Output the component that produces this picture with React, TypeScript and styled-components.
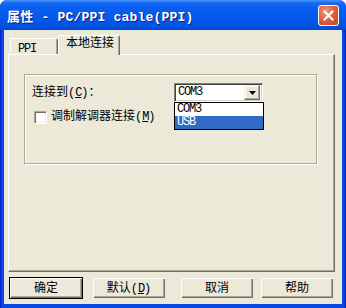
import React from 'react';
import styled, { createGlobalStyle } from 'styled-components';

const GlobalStyle = createGlobalStyle`
  html, body {
    margin: 0;
    padding: 0;
    background: #ffffff;
  }
  body {
    font-family: "Liberation Mono", "Noto Sans CJK SC", monospace;
  }
`;

const Window = styled.div`
  width: 346px;
  height: 308px;
  display: flex;
  flex-direction: column;
  background: linear-gradient(90deg, #0019CF 0, #0848E0 2px, #0848E0 calc(100% - 2px), #001DA8 100%);
  border-radius: 7px 7px 0 0;
  overflow: hidden;
`;

const TitleBar = styled.div`
  height: 30px;
  flex: none;
  display: flex;
  align-items: center;
  justify-content: space-between;
  padding: 0 7px 0 7px;
  background: linear-gradient(180deg, #4A96FF 0, #1468F4 3px, #0A5FF0 8px, #0558EA 18px, #0054E3 26px, #0048D0 30px);
  box-sizing: border-box;
`;

const Title = styled.div`
  color: #ffffff;
  font-size: 13px;
  font-weight: bold;
  letter-spacing: 0.2px;
  text-shadow: 1px 1px 0 #0A1E8A;
  white-space: pre;
  margin-top: 1px;
`;

const CloseButton = styled.div`
  width: 21px;
  height: 21px;
  box-sizing: border-box;
  border: 1px solid #ffffff;
  border-radius: 3px;
  background: radial-gradient(circle at 35% 30%, #F29A7C 0, #E2613A 45%, #C8421A 100%);
  display: flex;
  align-items: center;
  justify-content: center;
`;

const Body = styled.div`
  flex: 1;
  margin: 0 4px 4px;
  background: #ECE9D8;
  display: flex;
  flex-direction: column;
`;

const TabStrip = styled.div`
  display: flex;
  align-items: flex-end;
  padding: 5px 0 0 6px;
  height: 19px;
  position: relative;
  z-index: 1;
`;

const Tab = styled.div<{ $active?: boolean }>`
  box-sizing: border-box;
  height: ${({ $active }) => ($active ? '20px' : '16px')};
  width: ${({ $active }) => ($active ? '62px' : '48px')};
  margin-bottom: ${({ $active }) => ($active ? '-1px' : '0')};
  padding: ${({ $active }) => ($active ? '1px 0 0 7px' : '3px 0 0 7px')};
  background: #ECE9D8;
  border-top: 1px solid #ffffff;
  border-left: 1px solid #ffffff;
  border-right: 1px solid #716F64;
  box-shadow: inset -1px 0 0 #ACA899;
  border-radius: 2px 2px 0 0;
  font-size: 12px;
  letter-spacing: ${({ $active }) => ($active ? '0' : '-1.2px')};
  line-height: 14px;
  color: #000;
`;

const Panel = styled.div`
  box-sizing: border-box;
  margin: 0 7px 0 4px;
  height: 218px;
  border-top: 1px solid #ffffff;
  border-left: 1px solid #ffffff;
  border-right: 1px solid #716F64;
  border-bottom: 1px solid #716F64;
  box-shadow: inset -1px -1px 0 #ACA899;
  padding: 19px 0 0 15px;
`;

const GroupBox = styled.div`
  box-sizing: border-box;
  width: 293px;
  height: 90px;
  border: 1px solid #ACA899;
  box-shadow: 1px 1px 0 #ffffff, inset 1px 1px 0 #ffffff;
  padding: 8px 0 0 7px;
`;

const Row = styled.div<{ $top?: number }>`
  display: flex;
  align-items: center;
  margin-top: ${({ $top }) => $top ?? 0}px;
`;

const Label = styled.div<{ $width?: number }>`
  width: ${({ $width }) => ($width ? `${$width}px` : 'auto')};
  font-size: 12px;
  line-height: 14px;
  color: #000;
  white-space: pre;
`;

const Key = styled.span`
  text-decoration: underline;
  letter-spacing: -1.2px;
`;

const Combo = styled.div`
  position: relative;
  box-sizing: border-box;
  width: 89px;
  height: 19px;
  background: #ffffff;
  border-top: 1px solid #808080;
  border-left: 1px solid #808080;
  border-right: 1px solid #ffffff;
  border-bottom: 1px solid #ffffff;
  box-shadow: inset 1px 1px 0 #404040, inset -1px -1px 0 #D4D0C8;
  display: flex;
  align-items: center;
  padding-left: 3px;
`;

const ComboText = styled.span`
  flex: 1;
  font-size: 12px;
  letter-spacing: -1.2px;
  line-height: 13px;
  color: #000;
`;

const DropButton = styled.div`
  box-sizing: border-box;
  width: 16px;
  height: 15px;
  margin-right: 2px;
  background: #ECE9D8;
  border-top: 1px solid #F1EFE2;
  border-left: 1px solid #F1EFE2;
  border-right: 1px solid #716F64;
  border-bottom: 1px solid #716F64;
  box-shadow: inset -1px -1px 0 #ACA899, inset 1px 1px 0 #ffffff;
  display: flex;
  align-items: center;
  justify-content: center;
`;

const DropList = styled.div`
  position: absolute;
  left: -1px;
  top: 18px;
  width: 90px;
  box-sizing: border-box;
  border: 1px solid #000000;
  background: #ffffff;
  z-index: 2;
`;

const Option = styled.div<{ $selected?: boolean }>`
  height: 13px;
  padding-left: 2px;
  font-size: 12px;
  letter-spacing: -1.2px;
  line-height: 13px;
  color: ${({ $selected }) => ($selected ? '#ffffff' : '#000000')};
  background: ${({ $selected }) => ($selected ? '#316AC5' : 'transparent')};
`;

const CheckBox = styled.div`
  box-sizing: border-box;
  width: 13px;
  height: 13px;
  margin: 0 4px 0 2px;
  background: #ffffff;
  border-top: 1px solid #ACA899;
  border-left: 1px solid #ACA899;
  border-right: 1px solid #ffffff;
  border-bottom: 1px solid #ffffff;
  box-shadow: inset 1px 1px 0 #716F64, inset -1px -1px 0 #F1EFE2;
`;

const ButtonRow = styled.div`
  display: flex;
  padding: 5px 0 0 5px;
`;

const Button = styled.div<{ $default?: boolean; $gap?: number }>`
  box-sizing: border-box;
  width: 74px;
  height: 22px;
  margin-left: ${({ $gap }) => $gap ?? 0}px;
  background: #ECE9D8;
  border: 1px solid ${({ $default }) => ($default ? '#000000' : 'transparent')};
  box-shadow: inset 1px 1px 0 #ffffff, inset -1px -1px 0 #716F64, inset -2px -2px 0 #ACA899;
  display: flex;
  align-items: center;
  justify-content: center;
  font-size: 12px;
  line-height: 14px;
  color: #000;
  padding-top: 1px;
`;

export default function App() {
  return (
    <>
      <GlobalStyle />
      <Window>
        <TitleBar>
          <Title>属性 - PC/PPI cable(PPI)</Title>
          <CloseButton>
            <svg width="11" height="11" viewBox="0 0 11 11">
              <path d="M1.5 1.5 L9.5 9.5 M9.5 1.5 L1.5 9.5" stroke="#ffffff" strokeWidth="2" strokeLinecap="square" />
            </svg>
          </CloseButton>
        </TitleBar>
        <Body>
          <TabStrip>
            <Tab>PPI</Tab>
            <Tab $active>本地连接</Tab>
          </TabStrip>
          <Panel>
            <GroupBox>
              <Row $top={0}>
                <Label $width={142}>
                  连接到(<Key>C</Key>)：
                </Label>
                <Combo>
                  <ComboText>COM3</ComboText>
                  <DropButton>
                    <svg width="7" height="4" viewBox="0 0 7 4">
                      <path d="M0 0 H7 L3.5 4 Z" fill="#000000" />
                    </svg>
                  </DropButton>
                  <DropList>
                    <Option>COM3</Option>
                    <Option $selected>USB</Option>
                  </DropList>
                </Combo>
              </Row>
              <Row $top={8}>
                <CheckBox />
                <Label>
                  调制解调器连接(<Key>M</Key>)
                </Label>
              </Row>
            </GroupBox>
          </Panel>
          <ButtonRow>
            <Button $default>确定</Button>
            <Button $gap={9}>
              默认(<Key>D</Key>)
            </Button>
            <Button $gap={14}>取消</Button>
            <Button $gap={6}>帮助</Button>
          </ButtonRow>
        </Body>
      </Window>
    </>
  );
}
